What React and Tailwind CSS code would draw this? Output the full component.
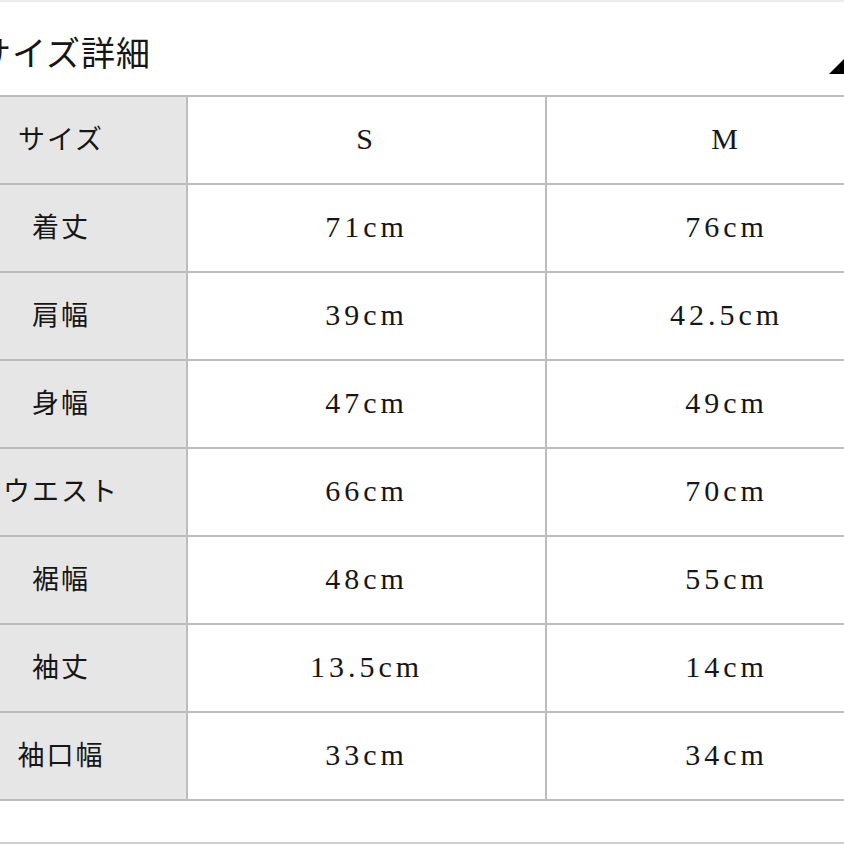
import React from 'react'

const rows = [
    { label: '着丈', s: '71cm', m: '76cm' },
    { label: '肩幅', s: '39cm', m: '42.5cm' },
    { label: '身幅', s: '47cm', m: '49cm' },
    { label: 'ウエスト', s: '66cm', m: '70cm' },
    { label: '裾幅', s: '48cm', m: '55cm' },
    { label: '袖丈', s: '13.5cm', m: '14cm' },
    { label: '袖口幅', s: '33cm', m: '34cm' },
]

const jp = { fontFamily: '"Noto Sans CJK JP", "Noto Sans", sans-serif' }
const serif = { fontFamily: '"Liberation Serif", "Noto Sans CJK JP", serif' }

const Row = ({ label, s, m }) => (
    <div className="flex h-[88px] border-b-2 border-[#bdbdbd]">
        <div
            className="w-[247px] shrink-0 bg-[#e6e6e6] border-r-2 border-[#bdbdbd] flex items-center justify-center pb-[3px] pr-[5px] text-[27px] tracking-[2px] text-[#161616]"
            style={jp}
        >
            {label}
        </div>
        <div
            className="w-[359px] shrink-0 border-r-2 border-[#bdbdbd] flex items-center justify-center pb-[4px] text-[30px] tracking-[4px] text-[#161616]"
            style={serif}
        >
            {s}
        </div>
        <div
            className="w-[359px] shrink-0 flex items-center justify-center pb-[4px] text-[30px] tracking-[4px] text-[#161616]"
            style={serif}
        >
            {m}
        </div>
    </div>
)

export default function App() {
    return (
        <div className="relative w-[844px] h-[844px] overflow-hidden bg-white">
            <div className="h-[2px] bg-[#ececec]" />

            <div className="h-[93px] ml-[-59px] pl-[36px] pt-[7px] flex items-center">
                <h2 className="text-[34px] tracking-[1px] text-[#161616] leading-none" style={jp}>
                    サイズ詳細
                </h2>
            </div>

            <svg
                className="absolute right-[-6px] top-[53px]"
                width="21"
                height="21"
                viewBox="0 0 21 21"
            >
                <polygon points="0,21 21,0 21,21" fill="#000" />
            </svg>

            <div className="ml-[-59px] w-[969px] border-t-2 border-[#bdbdbd]">
                <Row label="サイズ" s="S" m="M" />
                {rows.map((r) => (
                    <Row key={r.label} {...r} />
                ))}
            </div>

            <div className="h-[41px]" />
            <div className="h-[2px] bg-[#cfcfcf]" />
        </div>
    )
}
